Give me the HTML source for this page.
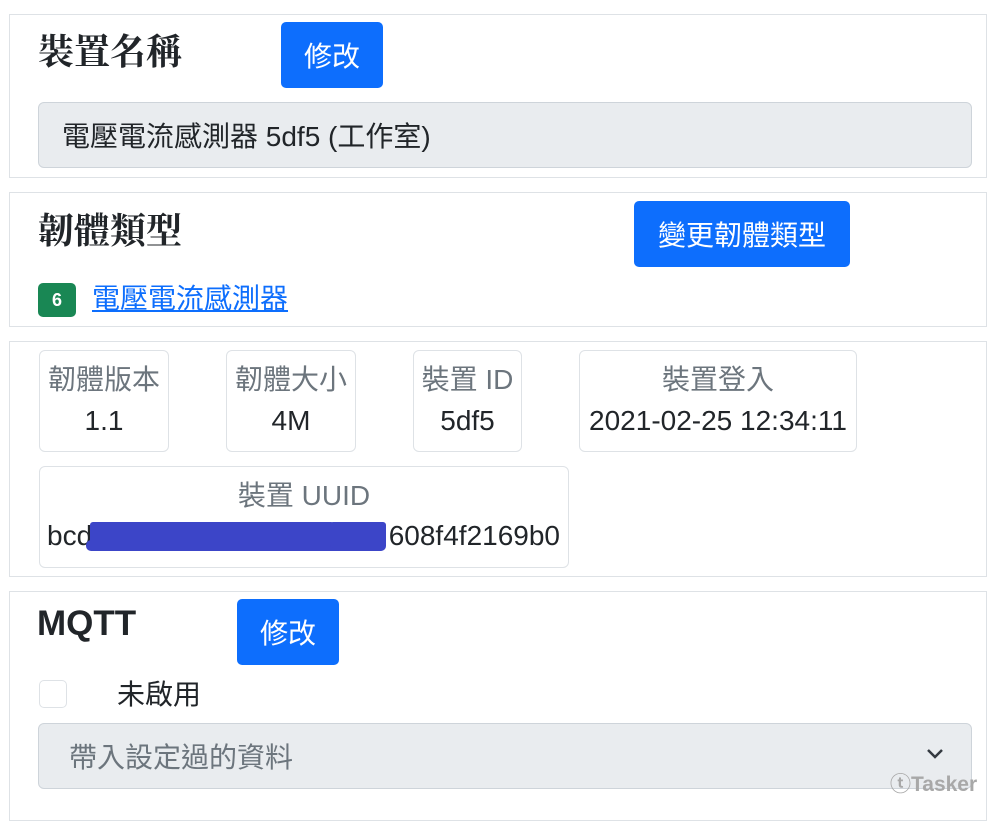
<!DOCTYPE html>
<html><head><meta charset="utf-8"><style>
*{box-sizing:border-box;margin:0;padding:0}
body{width:1000px;height:805px;background:#fff;position:relative;overflow:hidden;font-family:"Liberation Sans","Noto Sans CJK TC",sans-serif;color:#212529}
.a{position:absolute}
.panel{position:absolute;left:9px;width:978px;border:1px solid #dee2e6;background:#fff}
.title{position:absolute;left:38px;font-family:"Noto Serif CJK SC","Liberation Serif",serif;font-weight:bold;font-size:36px;line-height:36px}
.btn{position:absolute;background:#0d6efd;color:#fff;border-radius:5px;font-size:28px;display:flex;align-items:center;justify-content:center}
.inp{position:absolute;left:38px;width:934px;height:66px;background:#e9ecef;border:1px solid #ced4da;border-radius:6px;font-size:28px;display:flex;align-items:center;padding-left:23px}
.box{position:absolute;border:1px solid #dee2e6;border-radius:6px;text-align:center;font-size:28px}
.box .l{color:#6c757d;margin-top:13px;line-height:32px}
.box .v{line-height:34px;margin-top:8px}
</style></head><body>
<div class="panel" style="top:14px;height:164px"></div>
<div class="title" style="top:32px">裝置名稱</div>
<div class="btn" style="left:281px;top:22px;width:102px;height:66px">修改</div>
<div class="inp" style="top:102px">電壓電流感測器 5df5 (工作室)</div>

<div class="panel" style="top:192px;height:135px"></div>
<div class="title" style="top:211px">韌體類型</div>
<div class="btn" style="left:634px;top:201px;width:216px;height:66px">變更韌體類型</div>
<div class="a" style="left:38px;top:283px;width:38px;height:34px;background:#198754;color:#fff;border-radius:5px;font-weight:bold;font-size:18px;display:flex;align-items:center;justify-content:center">6</div>
<div class="a" style="left:92px;top:282px;font-size:28px;color:#0d6efd;text-decoration:underline;line-height:34px">電壓電流感測器</div>

<div class="panel" style="top:341px;height:236px"></div>
<div class="box" style="left:39px;top:350px;width:130px;height:102px"><div class="l">韌體版本</div><div class="v">1.1</div></div>
<div class="box" style="left:226px;top:350px;width:130px;height:102px"><div class="l">韌體大小</div><div class="v">4M</div></div>
<div class="box" style="left:413px;top:350px;width:109px;height:102px"><div class="l">裝置 ID</div><div class="v">5df5</div></div>
<div class="box" style="left:579px;top:350px;width:278px;height:102px"><div class="l">裝置登入</div><div class="v">2021-02-25 12:34:11</div></div>
<div class="box" style="left:39px;top:466px;width:530px;height:102px"><div class="l">裝置 UUID</div></div>
<div class="a" style="left:47px;top:519px;font-size:28px;line-height:34px">bcdc</div>
<div class="a" style="left:380px;width:180px;text-align:right;top:519px;font-size:28px;line-height:34px">608f4f2169b0</div>
<div class="a" style="left:90px;top:522px;width:244px;height:29px;background:#3c45c8;border-radius:3px"></div>
<div class="a" style="left:86px;top:540px;width:300px;height:11px;background:#3c45c8;border-radius:5px"></div>
<div class="a" style="left:330px;top:522px;width:56px;height:26px;background:#3c45c8;border-radius:3px"></div>

<div class="panel" style="top:591px;height:230px"></div>
<div class="a" style="left:37px;top:605px;font-weight:bold;font-size:35px;line-height:38px">MQTT</div>
<div class="btn" style="left:237px;top:599px;width:102px;height:66px">修改</div>
<div class="a" style="left:39px;top:680px;width:28px;height:28px;border:1px solid #dee2e6;border-radius:5px"></div>
<div class="a" style="left:117px;top:678px;font-size:28px;line-height:34px">未啟用</div>
<div class="inp" style="top:723px;color:#6c757d;padding-left:30px;font-size:28px">帶入設定過的資料</div>
<svg class="a" style="left:925px;top:747px" width="20" height="14" viewBox="0 0 20 14"><path d="M3 3l7 7 7-7" fill="none" stroke="#343a40" stroke-width="2.5"/></svg>
<div class="a" style="left:890px;top:773px;font-size:21px;font-weight:bold;color:#a8a8a8;line-height:24px">ⓣTasker</div>
</body></html>
